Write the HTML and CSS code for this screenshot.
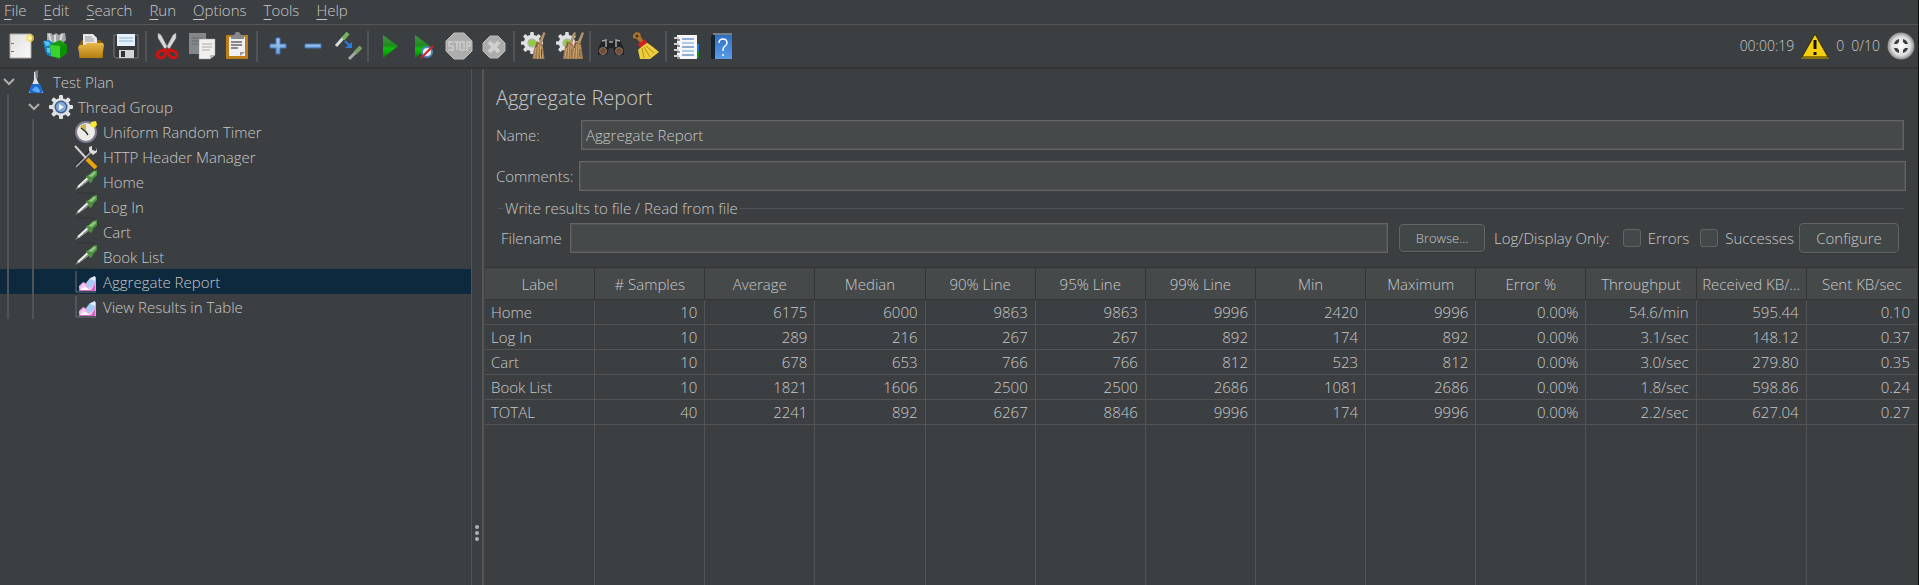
FILE: index.html
```html
<!DOCTYPE html>
<html lang="en">
<head>
<meta charset="utf-8">
<title>Aggregate Report</title>
<link rel="stylesheet" href="styles.css">
</head>
<body>
<svg class="defs" aria-hidden="true">
  <defs>
    <linearGradient id="paper" x1="0" y1="0" x2="1" y2="1"><stop offset="0" stop-color="#dedede"/><stop offset="1" stop-color="#fafafa"/></linearGradient>
    <linearGradient id="gold" x1="0" y1="0" x2="0" y2="1"><stop offset="0" stop-color="#e8b848"/><stop offset="1" stop-color="#b57d10"/></linearGradient>
    <linearGradient id="go" x1="0" y1="0" x2="0" y2="1"><stop offset="0" stop-color="#3f9a3f"/><stop offset=".45" stop-color="#1f8a1f"/><stop offset=".6" stop-color="#0cc00c"/><stop offset="1" stop-color="#058005"/></linearGradient>
    <linearGradient id="sky" x1="0" y1="0" x2="0" y2="1"><stop offset="0" stop-color="#a9cbf0"/><stop offset="1" stop-color="#6b9ed8"/></linearGradient>
    <linearGradient id="cover" x1="0" y1="0" x2="0" y2="1"><stop offset="0" stop-color="#2f6fc0"/><stop offset="1" stop-color="#5a9cea"/></linearGradient>
    <radialGradient id="ball"><stop offset="0" stop-color="#ffffff"/><stop offset=".7" stop-color="#dcdcdc"/><stop offset="1" stop-color="#8c8c8c"/></radialGradient>
    <symbol id="gear" viewBox="0 0 24 24">
      <g fill="#dfe1e3"><circle cx="12" cy="12" r="9"/><g id="teeth"><rect x="10" y="0" width="4" height="24" rx="1"/><rect x="0" y="10" width="24" height="4" rx="1"/></g><use href="#teeth" transform="rotate(45 12 12)"/></g>
    </symbol>
    <symbol id="dropper" viewBox="0 0 24 24">
      <path d="M0 21l3-5L12 7l4 4L7 19z" fill="#3a3d3e"/><path d="M1 20l3-4L13 7l3 3L7 17z" fill="#8f9490"/><path d="M4 17L14 8" stroke="#eef0ee" stroke-width="2"/><path d="M6 17L15 9" stroke="#666" stroke-dasharray="1 1"/>
      <path d="M12 6l3-1 4-4 4-1 0 5-4 4-1 3-2 1z" fill="#4f9142"/><path d="M14 6l7-5 1 2-4 4z" fill="#8fc67e"/><path d="M3 23h18" stroke="#303335"/>
    </symbol>
    <symbol id="chart" viewBox="0 0 24 24">
      <path d="M2 1v21h20" fill="none" stroke="#6c6f72"/><path d="M5 21v-5l4-4 4 2 4-6 5-1v14z" fill="#e9a0df"/><path d="M5 18l5-5 4 5 7-4v7H5z" fill="#f5c9f0"/><path d="M5 21v-3l4 2 5-2 3 2 4-6v7z" fill="#d067c4"/><path d="M5 20l6-3 6 3H5z" fill="#fff"/><path d="M12 13l4-5 5-2v6l-3 5-4 1z" fill="#a8caf4"/><path d="M16 9l5-3v5z" fill="#e2efff"/>
    </symbol>
    <symbol id="chevron" viewBox="0 0 12 8"><path d="M1 1l5 5 5-5" fill="none" stroke="#adadad" stroke-width="2"/></symbol>
    <symbol id="brush" viewBox="0 0 14 28"><path d="M12 0l2 1-4 11-3-1z" fill="#b59268"/><path d="M5 9l6 3 2 15H1l1-8z" fill="#a07a4e"/><path d="M5 12L3 26M7 12l-1 15M9 13v13M10 15l1 11" stroke="#c9a673" fill="none"/><path d="M6 11l-2 5M10 17v8" stroke="#6b4d2d"/></symbol>
    <symbol id="toolgear" viewBox="0 0 24 24"><use href="#gear"/><circle cx="12" cy="12" r="5" fill="#a5b895"/><circle cx="12" cy="12" r="3" fill="#86d624"/></symbol>
  </defs>
</svg>

<nav class="menubar" aria-label="Main menu">
  <button><u>F</u>ile</button><button><u>E</u>dit</button><button><u>S</u>earch</button><button><u>R</u>un</button><button><u>O</u>ptions</button><button><u>T</u>ools</button><button><u>H</u>elp</button>
</nav>

<header class="toolbar">
  <button aria-label="New"><svg viewBox="0 0 28 28"><path d="M3 2h21v24H3z" fill="url(#paper)" stroke="#aaa"/><path d="M4 11h3v1H4zM4 19h3v1H4z" fill="#777"/><circle cx="23" cy="6" r="4" fill="#f2dc5a" opacity=".75"/><circle cx="23" cy="6" r="2" fill="#fff49a"/></svg></button>
  <button aria-label="Templates"><svg viewBox="0 0 28 28"><path d="M5 1h4l2 2 3-2 3 2 3-2h3l1 7-5 5H5z" fill="#a4a7a9"/><path d="M7 2l2 8M13 3v7M20 2l-2 8" stroke="#d9dbdc" stroke-width="2"/><path d="M1 9l6-1 4 3v14l-6-2-2-5z" fill="#1b85c4"/><path d="M2 9l5 1 1 3-4 1zM5 16h3v5l-3-1z" fill="#63c4ee"/><path d="M9 12l9-4 7 5v8l-8 6-8-3z" fill="#179a10"/><path d="M8 13l10 1v12l-9-2z" fill="#3bd22c"/><path d="M18 14l7-1v8l-7 5z" fill="#0f8f08"/></svg></button>
  <button aria-label="Open"><svg viewBox="0 0 28 28"><path d="M2 13l3-5h18l3 3v15H2z" fill="#8d6212"/><path d="M6 2h10l4 4v10H6z" fill="#e9e9e9"/><path d="M8 5h7M8 7h9M8 9h9" stroke="#9a9a9a"/><path d="M1 15l2-2h5l2-2h16l1 2-2 13H3z" fill="url(#gold)"/></svg></button>
  <button aria-label="Save"><svg viewBox="0 0 28 28"><path d="M2 3h24v23H4l-2-2z" fill="#35383a" stroke="#777b7e"/><path d="M5 2h18v12H5z" fill="#e6f0f9"/><path d="M7 6h14M7 9h14" stroke="#8fb5d8"/><path d="M7 18h15v8H7z" fill="#d5d5d5"/><path d="M9 19h4v6H9z" fill="#303234"/></svg></button>
  <span class="sep"></span>
  <button aria-label="Cut"><svg viewBox="0 0 28 28"><path d="M5 1l3 2 8 15-3 1L5 6zM23 1l-3 2-8 15 3 1 8-13z" fill="#d6d8d9" stroke="#8c8e90" stroke-width=".5"/><g fill="none" stroke="#cf1212" stroke-width="3"><path d="M12 18l-5 1q-4 2-2 6l2 1q5 0 6-6zM16 18l5 1q4 2 2 6l-2 1q-5 0-6-6z"/></g></svg></button>
  <button aria-label="Copy"><svg viewBox="0 0 28 28"><path d="M1 1h17v21H1z" fill="#85888a"/><path d="M4 6h11M4 9h11M4 12h11" stroke="#65686a"/><path d="M11 7h16v16l-5 4H11z" fill="#efefef" stroke="#999" stroke-width=".5"/><path d="M14 12h10M14 15h10M14 18h8" stroke="#aaa"/><path d="M22 27v-4h5z" fill="#b9b9b9"/></svg></button>
  <button aria-label="Paste"><svg viewBox="0 0 28 28"><path d="M3 3h22v24H3z" fill="#bd7d1b"/><path d="M6 5h16v19H6z" fill="#f0f0f0"/><path d="M8 10h11M8 13h11M8 16h7" stroke="#888" stroke-width="2"/><path d="M17 24v-4h5z" fill="#999"/><path d="M8 7V3h3l2-3h3l2 3h3v4z" fill="#85898a"/></svg></button>
  <span class="sep"></span>
  <button aria-label="Expand all"><svg viewBox="0 0 28 28"><path d="M12 6h4v6h6v4h-6v6h-4v-6H6v-4h6z" fill="url(#sky)" stroke="#4078bd"/></svg></button>
  <button aria-label="Collapse all"><svg viewBox="0 0 28 28"><path d="M6 12h16v4H6z" fill="url(#sky)" stroke="#4078bd"/></svg></button>
  <button aria-label="Toggle"><svg viewBox="0 0 28 28"><path d="M2 14L10 5" stroke="#d8dcd8" stroke-width="3"/><path d="M9 7l5-6" stroke="#73b35c" stroke-width="4"/><path d="M11 9l6 6" stroke="#2b7de0" stroke-width="2"/><path d="M18 10v6h-7z" fill="#2b7de0"/><path d="M15 27l7-7" stroke="#a7aaa7" stroke-width="3"/><path d="M21 21l6-6" stroke="#789e69" stroke-width="4"/></svg></button>
  <span class="sep"></span>
  <button aria-label="Start"><svg viewBox="0 0 28 28"><path d="M8 3l15 11L8 26z" fill="url(#go)"/></svg></button>
  <button aria-label="Start no pauses"><svg viewBox="0 0 28 28"><path d="M5 3l15 11L5 26z" fill="url(#go)"/><circle cx="17" cy="20" r="5" fill="#e8eef4" stroke="#4f87bd" stroke-width="2"/><path d="M11 26L23 14" stroke="#d22222" stroke-width="2"/></svg></button>
  <button aria-label="Stop"><svg viewBox="0 0 28 28"><path d="M9 1h10l8 8v10l-8 8H9l-8-8V9z" fill="#adadad" stroke="#bdbdbd"/><g fill="none" stroke="#cdcdcd" stroke-width="1.500"><path d="M8 10H4v4h4v4H3M9 10h5M12 10v8M15 10h4v8h-4zM22 19v-9h3v4h-3"/></g></svg></button>
  <button aria-label="Shutdown"><svg viewBox="0 0 28 28"><path d="M10 4h8l7 7v8l-7 7h-8l-7-7v-8z" fill="#acacac" stroke="#bababa"/><path d="M9 10l10 10M19 10L9 20" stroke="#d0d0d0" stroke-width="4"/></svg></button>
  <span class="sep"></span>
  <button aria-label="Clear"><svg viewBox="0 0 28 28"><use href="#toolgear" x="0" y="0" width="22" height="22"/><use href="#brush" x="10" y="0" width="15" height="28"/></svg></button>
  <button aria-label="Clear all"><svg viewBox="0 0 28 28"><use href="#toolgear" x="0" y="0" width="22" height="22"/><use href="#brush" x="6" y="0" width="14" height="28"/><use href="#brush" x="14" y="0" width="14" height="28"/></svg></button>
  <span class="sep"></span>
  <button aria-label="Search"><svg viewBox="0 0 28 28"><path d="M1 17L5 8l3-1 3 2h6l3-2 3 1 4 9v6h-9l-2-7h-4l-2 7H1z" fill="#222324"/><path d="M5 9l4-1v7M23 9l-4-1v7M12 10h4" fill="none" stroke="#a3a5a6" stroke-width="1.500"/><circle cx="6" cy="19" r="3.500" fill="#7d4a2b" stroke="#777"/><circle cx="22" cy="19" r="3.500" fill="#7d4a2b" stroke="#777"/></svg></button>
  <button aria-label="Reset search"><svg viewBox="0 0 28 28"><path d="M1 3l3-3 4 1 1 4 3 5-3 2-4-5-4-1z" fill="#ad7427"/><circle cx="5" cy="4" r="1.500" fill="#4a3210"/><path d="M14 10l7 5 6 5-9 7H8l-2-9z" fill="#edcf3d"/><path d="M14 14l8 7M12 15l6 10M10 16l2 10" stroke="#b78e13"/><path d="M7 14l7-5" stroke="#d42020" stroke-width="4"/></svg></button>
  <span class="sep"></span>
  <button aria-label="Function helper"><svg viewBox="0 0 28 28"><path d="M22 12h4v7h-4z" fill="#1878d8"/><path d="M22 19h4v7h-4z" fill="#158d1c"/><path d="M4 3h20v24H4z" fill="#f7f7f7"/><path d="M9 7h12M9 15h12M9 23h12" stroke="#2469b5"/><path d="M9 11h12M9 19h12" stroke="#62a0df"/><path d="M1 6h5M1 12h5M1 18h5M1 24h5" stroke="#cfcfcf" stroke-width="2"/><path d="M3 8h4M3 14h4M3 20h4M3 26h4" stroke="#292929"/></svg></button>
  <button aria-label="Help"><svg viewBox="0 0 28 28"><path d="M3 4l3-3h18v24l-3 2H3z" fill="#15222f"/><path d="M7 3h17v24H7z" fill="url(#cover)"/><path d="M5 2h19" stroke="#d6dce3"/><path d="M11 11q0-4 4-4t4 4q0 2-3 4-1 1-1 4M15 22v2" fill="none" stroke="#fff" stroke-width="1.500"/></svg></button>
  <div class="status">
    <span class="clock">00:00:19</span>
    <svg viewBox="0 0 28 28"><path d="M14 2l13 23H1z" fill="#f5cf12" stroke="#302900"/><path d="M1 25h26l1 2H0z" fill="#897310"/><path d="M14 8v9M14 20v3" stroke="#171400" stroke-width="3"/></svg>
    <span class="errors">0</span><span class="threads">0/10</span>
    <svg viewBox="0 0 28 28"><circle cx="14" cy="14" r="13.500" fill="url(#ball)"/><g fill="#3b3d3e"><path d="M7 12q1-4 5-5v3l-2 2zM21 12q-1-4-5-5v3l2 2zM7 16q1 4 5 5v-3l-2-2zM21 16q-1 4-5 5v-3l2-2z"/></g></svg>
  </div>
</header>

<div class="workspace">
  <aside class="tree">
    <div class="node l0"><svg class="chev"><use href="#chevron"/></svg><svg class="ico" viewBox="0 0 24 24"><path d="M10 2l4-1-1 9 6 12q1 1-2 1H7q-3 0-2-1l5-12z" fill="#dde5ee"/><path d="M8 14h8l3 7q0 2-3 2H8q-3 0-3-2z" fill="#1c6bd0"/><path d="M9 19q3-5 6 0t-3 3-3-3z" fill="#5ba9f7"/><path d="M11 1l3-1v6l-2 4z" fill="#7b8085"/></svg>Test Plan</div>
    <ul>
      <li><div class="node l1"><svg class="chev"><use href="#chevron"/></svg><svg class="ico" viewBox="0 0 24 24"><use href="#gear"/><circle cx="12" cy="12" r="6.500" fill="#3c5f96"/><circle cx="12" cy="12" r="5" fill="#86a9d2"/><path d="M10 9l5 3-5 3z" fill="#f2f6fb"/></svg>Thread Group</div>
        <ul class="inner">
          <li class="node l2"><svg class="ico" viewBox="0 0 24 24"><circle cx="12" cy="12" r="10" fill="#ecebe5" stroke="#7f7c91" stroke-width="2"/><path d="M12 12L6 7q2-3 6-3z" fill="#cdb54f"/><path d="M7 8l5 4 2 3" fill="none" stroke="#333" stroke-width="1.500"/><path d="M17 2l5-1 1 4-3 3-4-2z" fill="#f7e733"/></svg>Uniform Random Timer</li>
          <li class="node l2"><svg class="ico" viewBox="0 0 24 24"><path d="M2 22L18 5" stroke="#202223" stroke-width="4"/><path d="M2 22L18 6" stroke="#969a9c" stroke-width="2"/><path d="M15 6V2l3-1v4l4 1 1-3v4l-4 3z" fill="#dedede"/><path d="M1 1l11 12" stroke="#d0d2d3" stroke-width="2"/><path d="M13 14l9 9" stroke="#e9a50b" stroke-width="4"/></svg>HTTP Header Manager</li>
          <li class="node l2"><svg class="ico"><use href="#dropper"/></svg>Home</li>
          <li class="node l2"><svg class="ico"><use href="#dropper"/></svg>Log In</li>
          <li class="node l2"><svg class="ico"><use href="#dropper"/></svg>Cart</li>
          <li class="node l2"><svg class="ico"><use href="#dropper"/></svg>Book List</li>
          <li class="node l2 selected"><svg class="ico"><use href="#chart"/></svg>Aggregate Report</li>
          <li class="node l2"><svg class="ico"><use href="#chart"/></svg>View Results in Table</li>
        </ul>
      </li>
    </ul>
  </aside>
  <div class="splitter"><i></i><i></i><i></i></div>
  <main class="panel">
    <form class="form">
      <h1>Aggregate Report</h1>
      <div class="field name"><label for="name">Name:</label><input id="name" type="text" value="Aggregate Report"></div>
      <div class="field comments"><label for="comments">Comments:</label><input id="comments" type="text"></div>
      <fieldset>
        <legend>Write results to file / Read from file</legend>
        <div class="file">
          <label for="filename">Filename</label><input id="filename" type="text">
          <button type="button" class="browse">Browse...</button>
          <span class="only">Log/Display Only:</span>
          <label class="check"><input type="checkbox">Errors</label>
          <label class="check"><input type="checkbox">Successes</label>
          <button type="button" class="configure">Configure</button>
        </div>
      </fieldset>
    </form>
    <div class="results">
      <table>
        <thead><tr><th>Label</th><th># Samples</th><th>Average</th><th>Median</th><th>90% Line</th><th>95% Line</th><th>99% Line</th><th>Min</th><th>Maximum</th><th>Error %</th><th>Throughput</th><th>Received KB/...</th><th>Sent KB/sec</th></tr></thead>
        <tbody>
          <tr><td>Home</td><td>10</td><td>6175</td><td>6000</td><td>9863</td><td>9863</td><td>9996</td><td>2420</td><td>9996</td><td>0.00%</td><td>54.6/min</td><td>595.44</td><td>0.10</td></tr>
          <tr><td>Log In</td><td>10</td><td>289</td><td>216</td><td>267</td><td>267</td><td>892</td><td>174</td><td>892</td><td>0.00%</td><td>3.1/sec</td><td>148.12</td><td>0.37</td></tr>
          <tr><td>Cart</td><td>10</td><td>678</td><td>653</td><td>766</td><td>766</td><td>812</td><td>523</td><td>812</td><td>0.00%</td><td>3.0/sec</td><td>279.80</td><td>0.35</td></tr>
          <tr><td>Book List</td><td>10</td><td>1821</td><td>1606</td><td>2500</td><td>2500</td><td>2686</td><td>1081</td><td>2686</td><td>0.00%</td><td>1.8/sec</td><td>598.86</td><td>0.24</td></tr>
          <tr><td>TOTAL</td><td>40</td><td>2241</td><td>892</td><td>6267</td><td>8846</td><td>9996</td><td>174</td><td>9996</td><td>0.00%</td><td>2.2/sec</td><td>627.04</td><td>0.27</td></tr>
          <tr class="rest"><td></td><td></td><td></td><td></td><td></td><td></td><td></td><td></td><td></td><td></td><td></td><td></td><td></td></tr>
        </tbody>
      </table>
    </div>
  </main>
</div>
</body>
</html>
```

FILE: styles.css
```css
* { box-sizing: border-box; }
body {
  margin: 0;
  height: 100vh;
  display: flex;
  flex-direction: column;
  overflow: hidden;
  background: #3c3f41;
  color: #c8c8c8;
  border-right: 1px solid #0c0d0d;
  font: 300 15px/24px "Open Sans", "Noto Sans", sans-serif;
}
button, input { font: inherit; color: inherit; }
ul { list-style: none; margin: 0; padding: 0; }
.defs { position: absolute; width: 0; height: 0; }

.menubar { display: flex; align-items: flex-start; height: 25px; padding-left: 4px; gap: 17px; border-bottom: 1px solid #555555; }
.menubar button { border: 0; padding: 0; background: none; line-height: 21px; }
.menubar u { text-underline-offset: 3px; }

.toolbar { display: flex; align-items: center; height: 44px; padding: 0 3px; border-bottom: 2px solid #323435; }
.toolbar button { width: 35px; height: 35px; padding: 0; border: 0; background: none; display: grid; place-items: center; }
.toolbar svg { width: 28px; height: 28px; display: block; }
.sep { width: 2px; height: 31px; margin: 0 2px; background: #515354; }
.status { margin-left: auto; display: flex; align-items: center; gap: 7px; font-size: 14px; }

.workspace { flex: 1; display: flex; min-height: 0; }
.tree { flex: none; width: 472px; border-right: 1px solid #515355; }
.tree ul { position: relative; }
.tree ul::before { content: ""; position: absolute; z-index: 1; left: 7px; top: 0; bottom: 0; width: 2px; background: #515354; }
.tree ul.inner::before { left: 32px; }
.node { display: flex; align-items: center; height: 25px; white-space: pre; }
.l0 { padding-left: 3px; }
.l1 { padding-left: 28px; }
.l2 { padding-left: 74px; }
.chev { width: 12px; height: 8px; margin-right: 9px; }
.ico { width: 24px; height: 24px; margin-right: 5px; }
.selected { background: #0d293e; }
.splitter { flex: none; width: 12px; border-right: 2px solid #555555; display: flex; flex-direction: column; align-items: center; justify-content: flex-end; gap: 2px; padding-bottom: 44px; }
.splitter i { width: 4px; height: 4px; border-radius: 50%; background: #afb1b3; }

.panel { flex: 1; min-width: 0; display: flex; flex-direction: column; padding: 0 1px 0 1px; }
.form { padding: 15px 11px 0; }
h1 { margin: 0 0 8px; font-size: 20px; line-height: 28px; font-weight: 300; }
.field { display: flex; align-items: center; }
.field input, .file > input { flex: 1; min-width: 0; height: 30px; padding: 0 4px; border: 1px solid #646464; outline: 1px solid #505354; outline-offset: -2px; background: #45494a; }
.name label { width: 85px; }
.name { padding-right: 2px; margin-bottom: 11px; }
.comments label { width: 83px; }
fieldset { margin: 5px 2px 0; padding: 2px 5px 0 3px; border: 0; border-top: 1px solid #515355; min-width: 0; }
legend { margin-left: 2px; padding: 0 2px; }
.file { display: flex; align-items: center; height: 45px; padding-bottom: 13px; }
.file > label:first-child { width: 69px; }
.file button { border: 1px solid #646464; border-radius: 4px; background: #414647; box-shadow: 0 1px 1px #323536; padding: 0; }
.file .browse { width: 86px; height: 28px; margin: 0 9px 0 11px; font-size: 13px; line-height: 24px; }
.file .configure { width: 100px; height: 30px; margin-left: 5px; }
.check { display: flex; align-items: center; gap: 7px; margin-left: 13px; }
.check + .check { margin-left: 11px; }
.check input { appearance: none; width: 18px; height: 18px; margin: 0; border: 1px solid #646464; border-radius: 3px; background: #43494a; }

.results { flex: 1; min-height: 0; display: grid; }
table { width: 100%; height: 100%; table-layout: fixed; border-collapse: separate; border-spacing: 0; }
th { height: 33px; padding: 0; border: solid #323435; border-width: 1px 1px 1px 0; background: #45494a; font-weight: 300; white-space: nowrap; }
td { height: 25px; padding: 0 7px; line-height: 24px; border: solid #515355; border-width: 0 1px 1px 0; text-align: right; }
td:first-child { text-align: left; padding-left: 6px; }
th:last-child, td:last-child { border-right-width: 0; }
.rest td { height: auto; border-bottom: 0; }
```
